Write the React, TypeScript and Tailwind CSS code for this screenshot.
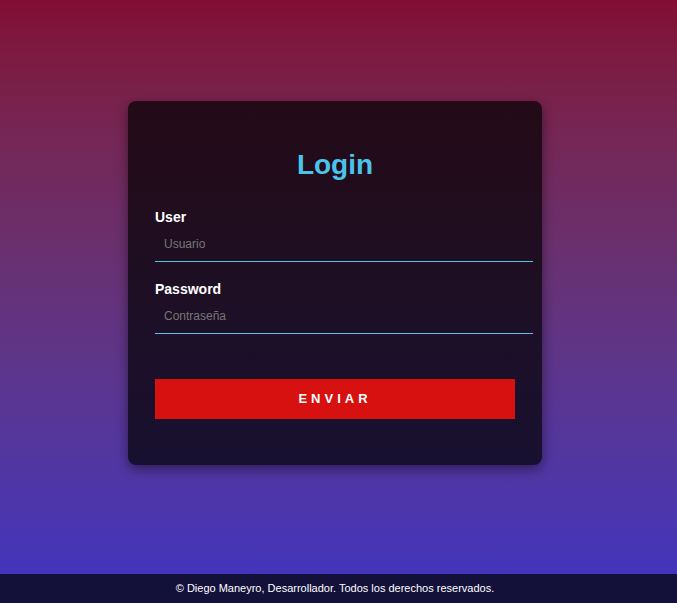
import React from "react";

const font = { fontFamily: '"Liberation Sans", Arial, sans-serif' };

const Field = ({ label, placeholder, type }: { label: string; placeholder: string; type: string }) => {
  return (
    <div className="flex flex-col">
      <label className="text-[14px] leading-[16px] font-bold text-white">{label}</label>
      <input
        type={type}
        placeholder={placeholder}
        className="mt-[1px] h-[36px] w-[378px] border-b border-[#5bc2e7] bg-transparent pl-[9px] text-[12px] text-white placeholder:text-[#767676] outline-none"
        style={font}
      />
    </div>
  );
};

const App = () => {
  return (
    <div className="flex h-[603px] flex-col" style={font}>
      <main className="flex flex-1 justify-center bg-gradient-to-b from-[#820c33] to-[#4334bb] pt-[101px] pr-[7px]">
        <form
          className="flex h-[364px] w-[414px] flex-col rounded-lg bg-black/70 px-[27px] pt-[48px] shadow-[0_4px_12px_rgba(0,0,0,0.45)]"
          onSubmit={(e) => e.preventDefault()}
        >
          <h2 className="text-center text-[28px] leading-[32px] font-bold text-[#4bc4ea]">Login</h2>

          <div className="mt-[28px]">
            <Field label="User" placeholder="Usuario" type="text" />
          </div>
          <div className="mt-[19px]">
            <Field label="Password" placeholder="Contraseña" type="password" />
          </div>

          <button
            type="submit"
            className="mt-[45px] h-[40px] w-[360px] bg-[#d71010] text-[13px] font-bold tracking-[4px] text-white"
          >
            ENVIAR
          </button>
        </form>
      </main>

      <footer className="flex h-[29px] items-center justify-center bg-[#13113a] pr-[7px] text-[11px] text-white">
        © Diego Maneyro, Desarrollador. Todos los derechos reservados.
      </footer>
    </div>
  );
};

export default App;
